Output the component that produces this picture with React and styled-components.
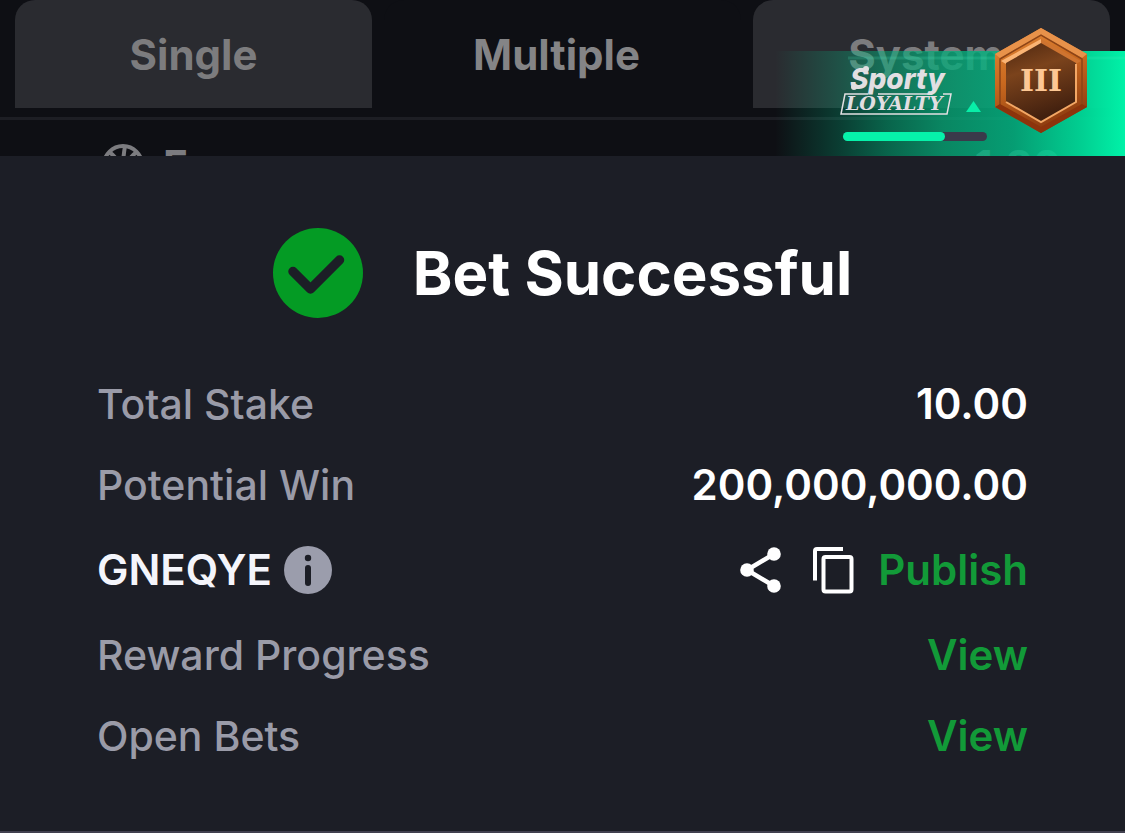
import React from 'react';
import styled, { createGlobalStyle } from 'styled-components';

const GlobalStyle = createGlobalStyle`
  * {
    box-sizing: border-box;
  }

  body {
    margin: 0;
    background: #0e0f14;
    font-family: Inter, 'Liberation Sans', sans-serif;
  }

  button {
    padding: 0;
    border: none;
    background: none;
    font: inherit;
    color: inherit;
    cursor: pointer;
  }
`;

const Page = styled.div`
  display: flex;
  flex-direction: column;
  min-height: 100vh;
`;

const Slip = styled.section`
  position: relative;
  height: 156px;
  overflow: hidden;
  background: #0e0f14;
`;

const Tabs = styled.div`
  display: grid;
  grid-template-columns: repeat(3, 1fr);
  gap: 12px;
  padding: 0 15px;
`;

const Tab = styled.button`
  height: 108px;
  padding-right: ${({ $inset }) => ($inset ? '12px' : '0')};
  border-radius: 20px 20px 0 0;
  background: ${({ $active }) => ($active ? '#0e0f14' : '#2a2b30')};
  color: ${({ $active }) => ($active ? '#848486' : '#7c7c7e')};
  font-size: 42px;
  font-weight: 700;
`;

const Divider = styled.div`
  height: 3px;
  margin-top: 9px;
  background: #1d1e24;
`;

const Selection = styled.div`
  display: flex;
  align-items: flex-start;
  padding: 24px 64px 0 102px;
  color: #7c7c80;
  font-size: 42px;
  font-weight: 700;
  line-height: 44px;
`;

const SelectionName = styled.span`
  flex: 1;
  margin-left: 19px;
`;

const LoyaltyBanner = styled.aside`
  position: absolute;
  right: 0;
  bottom: 0;
  width: 350px;
  height: 128px;
`;

const BannerGlow = styled.div`
  position: absolute;
  inset: 23px 0 0;
  background: linear-gradient(
    90deg,
    rgba(0, 239, 165, 0) 0%,
    rgba(0, 190, 135, 0.26) 18%,
    rgba(4, 170, 120, 0.55) 32%,
    rgba(8, 168, 120, 0.78) 48%,
    rgba(4, 180, 130, 0.86) 68%,
    rgba(0, 220, 154, 0.94) 88%,
    #00f2a8 100%
  );
`;

const LoyaltyArt = styled.svg`
  position: absolute;
  inset: 0;
`;

const Progress = styled.div`
  position: absolute;
  right: 138px;
  bottom: 15px;
  width: 144px;
  height: 9px;
  border-radius: 5px;
  background: #3a3a4a;
`;

const ProgressFill = styled.div`
  height: 100%;
  border-radius: 5px;
  background: #06f2aa;
`;

const Panel = styled.main`
  flex: 1;
  padding: 72px 97px 0;
  border-bottom: 2px solid #41404f;
  background: #1c1e26;
`;

const Heading = styled.header`
  display: flex;
  align-items: center;
  justify-content: center;
  gap: 50px;
  height: 90px;
`;

const Title = styled.h1`
  margin: 0;
  color: #fff;
  font-size: 60px;
  font-weight: 700;
`;

const Rows = styled.div`
  display: flex;
  flex-direction: column;
  gap: 33px;
  margin-top: 62px;
`;

const Row = styled.div`
  display: flex;
  align-items: center;
  justify-content: space-between;
  min-height: 48px;
  font-size: 42px;
  line-height: 48px;
`;

const CodeRow = styled(Row)`
  min-height: 56px;
`;

const Label = styled.span`
  color: #9a9ba8;
  font-size: 41px;
  font-weight: 500;
`;

const Value = styled.strong`
  color: #fff;
  font-weight: 600;
`;

const Group = styled.div`
  display: flex;
  align-items: center;
  gap: ${({ $gap }) => $gap}px;
`;

const Code = styled.strong`
  color: #f4f5fb;
  font-weight: 600;
`;

const IconButton = styled.button`
  display: flex;
`;

const Action = styled.a`
  color: #129a38;
  font-weight: 600;
  text-decoration: none;
`;

const BallIcon = () => (
  <svg width="42" height="42" viewBox="0 0 42 42" fill="none" stroke="#7c7c80" strokeWidth="4">
    <circle cx="21" cy="21" r="19" />
    <path d="M23 2c-2 12-3 26-1 38M2 21h38M7 8c12 8 12 19 0 26M35 8c-12 8-12 19 0 26" />
  </svg>
);

const CheckIcon = () => (
  <svg width="90" height="90" viewBox="0 0 90 90" fill="none">
    <circle cx="45" cy="45" r="45" fill="#049b24" />
    <path
      d="M20 43.500l17.500 17.500 29-29"
      stroke="#1c1e26"
      strokeWidth="9.500"
      strokeLinecap="round"
      strokeLinejoin="round"
    />
  </svg>
);

const InfoIcon = () => (
  <svg width="48" height="48" viewBox="0 0 48 48">
    <circle cx="24" cy="24" r="24" fill="#9b9dac" />
    <circle cx="24" cy="12" r="3.2" fill="#1c1e26" />
    <rect x="21" y="19" width="6" height="21" rx="3" fill="#1c1e26" />
  </svg>
);

const ShareIcon = () => (
  <svg width="41" height="48" viewBox="0 0 41 48" fill="#fff">
    <path d="M34 8L7 24l27 16" fill="none" stroke="#fff" strokeWidth="4.5" />
    <circle cx="34" cy="8" r="6.8" />
    <circle cx="7" cy="24" r="6.8" />
    <circle cx="34" cy="40" r="6.8" />
  </svg>
);

const CopyIcon = () => (
  <svg width="41" height="48" viewBox="0 0 41 48" fill="none" stroke="#fff" strokeWidth="4">
    <path d="M2 34.500V5a2 2 0 0 1 2-2h26" />
    <rect x="10.500" y="11" width="28" height="34.500" rx="2" />
  </svg>
);

const LoyaltyBadge = () => (
  <LoyaltyArt width="350" height="128" viewBox="775 28 350 128">
    <defs>
      <linearGradient id="rim" x1="0" y1="0" x2="0.3" y2="1">
        <stop offset="0" stopColor="#e58a3a" />
        <stop offset="0.5" stopColor="#c9691f" />
        <stop offset="1" stopColor="#8f3d10" />
      </linearGradient>
      <linearGradient id="face" x1="0" y1="0" x2="0.3" y2="1">
        <stop offset="0" stopColor="#4e2710" />
        <stop offset="0.4" stopColor="#7b431c" />
        <stop offset="1" stopColor="#42200f" />
      </linearGradient>
    </defs>
    <g fill="#e2dfe2">
      <text x="850" y="89" fontFamily="Inter, sans-serif" fontSize="28" fontWeight="800" fontStyle="italic">
        Sporty
      </text>
      <circle cx="866" cy="69" r="3" />
      <circle cx="854" cy="87" r="3" />
      <text x="846" y="110" fontFamily="'DejaVu Serif', serif" fontSize="19" fontWeight="700" fontStyle="italic">
        LOYALTY
      </text>
    </g>
    <path d="M868 94H845l-4 20h106l4-20h-8M878 94h54" fill="none" stroke="#e2dfe2" strokeWidth="1.500" />
    <path d="M966 112l7.500-11 7.500 11z" fill="#08efa8" />
    <path d="M848 58h277" stroke="#4ff0c0" strokeOpacity="0.18" strokeWidth="3" />
    <path d="M1041 28l46 26v53l-46 26-46-26V54z" fill="url(#rim)" />
    <path d="M995 54l46-26 46 26-5 4-41-23-41 23z" fill="#e8924a" />
    <path d="M1000 106V59l41-24 41 24v47" fill="none" stroke="#8c4417" strokeWidth="1.500" />
    <path d="M1001 61l40-22v5l-35 20z" fill="#fbb474" />
    <path d="M1041 39l40 22-5 3-35-20z" fill="#cf7430" />
    <path d="M995 107l46 26 46-26-5-3-41 23-41-23z" fill="#8c340c" />
    <path d="M1041 43l35 20v39l-35 20-35-20V63z" fill="url(#face)" />
    <path d="M1006 102l35 20 35-20V64" fill="none" stroke="#f3a765" strokeWidth="2" />
    <text
      x="1041"
      y="91"
      textAnchor="middle"
      fill="#fdc794"
      fontFamily="'DejaVu Serif', serif"
      fontSize="30"
      fontWeight="700"
    >
      III
    </text>
  </LoyaltyArt>
);

const App = () => {
  const progress = 71;

  return (
    <Page>
      <GlobalStyle />
      <Slip>
        <Tabs>
          <Tab>Single</Tab>
          <Tab $active $inset>Multiple</Tab>
          <Tab $inset>System</Tab>
        </Tabs>
        <Divider />
        <Selection>
          <BallIcon />
          <SelectionName>F</SelectionName>
          <span>1.80</span>
        </Selection>
        <LoyaltyBanner>
          <BannerGlow />
          <LoyaltyBadge />
          <Progress>
            <ProgressFill style={{ width: `${progress}%` }} />
          </Progress>
        </LoyaltyBanner>
      </Slip>

      <Panel>
        <Heading>
          <CheckIcon />
          <Title>Bet Successful</Title>
        </Heading>
        <Rows>
          <Row>
            <Label>Total Stake</Label>
            <Value>10.00</Value>
          </Row>
          <Row>
            <Label>Potential Win</Label>
            <Value>200,000,000.00</Value>
          </Row>
          <CodeRow>
            <Group $gap={12}>
              <Code>GNEQYE</Code>
              <IconButton aria-label="Code info">
                <InfoIcon />
              </IconButton>
            </Group>
            <Group $gap={24}>
              <Group $gap={32}>
                <IconButton aria-label="Share">
                  <ShareIcon />
                </IconButton>
                <IconButton aria-label="Copy">
                  <CopyIcon />
                </IconButton>
              </Group>
              <Action href="#publish">Publish</Action>
            </Group>
          </CodeRow>
          <Row>
            <Label>Reward Progress</Label>
            <Action href="#rewards">View</Action>
          </Row>
          <Row>
            <Label>Open Bets</Label>
            <Action href="#bets">View</Action>
          </Row>
        </Rows>
      </Panel>
    </Page>
  );
};

export default App;
